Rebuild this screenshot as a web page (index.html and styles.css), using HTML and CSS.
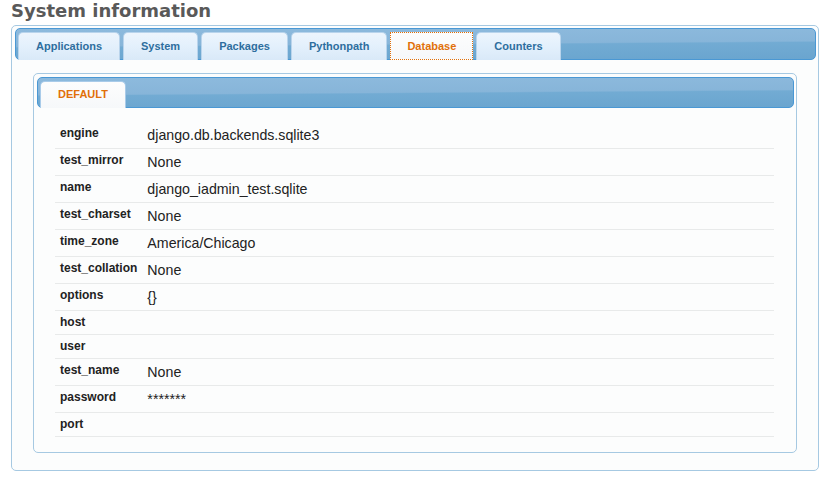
FILE: index.html
```html
<!DOCTYPE html>
<html>
<head>
<meta charset="utf-8">
<title>System information</title>
<link rel="stylesheet" href="styles.css">
</head>
<body>
<h1 class="title">System information</h1>
<div class="tabs outer">
  <ul class="nav outer-nav">
    <li class="tab">Applications</li>
    <li class="tab">System</li>
    <li class="tab">Packages</li>
    <li class="tab">Pythonpath</li>
    <li class="tab active focus">Database</li>
    <li class="tab">Counters</li>
  </ul>
  <div class="outer-panel">
    <div class="tabs inner">
      <ul class="nav inner-nav">
        <li class="tab active inner-tab">DEFAULT</li>
      </ul>
      <div class="inner-panel">
        <table class="info">
          <tr><th>engine</th><td>django.db.backends.sqlite3</td></tr>
          <tr><th>test_mirror</th><td>None</td></tr>
          <tr><th>name</th><td>django_iadmin_test.sqlite</td></tr>
          <tr><th>test_charset</th><td>None</td></tr>
          <tr><th>time_zone</th><td>America/Chicago</td></tr>
          <tr><th>test_collation</th><td>None</td></tr>
          <tr><th>options</th><td>{}</td></tr>
          <tr><th>host</th><td></td></tr>
          <tr><th>user</th><td></td></tr>
          <tr><th>test_name</th><td>None</td></tr>
          <tr><th>password</th><td>*******</td></tr>
          <tr><th>port</th><td></td></tr>
        </table>
      </div>
    </div>
  </div>
</div>
</body>
</html>
```
FILE: styles.css
```css
html, body {
  background: #ffffff;
}
body {
  margin: 0;
  padding: 0 14px 0 11px;
  font-family: "Liberation Sans", Arial, sans-serif;
}
.title {
  margin: 0 0 4px;
  font: bold 18px/21px "DejaVu Sans", sans-serif;
  color: #595959;
}
.tabs {
  border: 1px solid #a6c9e2;
  border-radius: 5px;
  background: #fcfdfd;
}
.outer {
  padding: 2px 2px 0 3px;
}
.inner {
  padding: 3px 2px 0 3px;
}
.nav {
  margin: 0;
  list-style: none;
  display: flex;
  align-items: flex-end;
  gap: 3px;
  border: 1px solid #4a98d4;
  border-radius: 5px;
  background: linear-gradient(179.6deg, #8dbadd 0%, #87b5d9 49%, #72abd3 53%, #6aa5cf 100%);
}
.outer-nav {
  padding: 3px 2px 0;
}
.inner-nav {
  padding: 3px 2px 0;
}
.tab {
  margin-bottom: -1px;
  border: 1px solid #b9d4ec;
  border-bottom: 0;
  border-radius: 5px 5px 0 0;
  background: linear-gradient(#edf5fd 0%, #e3f0fc 50%, #d9e9f8 100%);
  color: #2e6e9e;
  font: bold 11px/13px "Liberation Sans", Arial, sans-serif;
  padding: 7px 17px;
  white-space: nowrap;
}
.tab.active {
  background: linear-gradient(#fdfdfd, #f6f8fa);
  color: #e17009;
  border-color: #a9cbe9;
}
.tab.focus {
  border: 1px dotted #e17009;
  border-bottom: 1px dotted #e17009;
  border-radius: 0;
  padding: 7px 16px 6px;
}
.inner-tab {
  padding: 6px 17px 7px;
}
.outer-panel {
  padding: 13px 19px 17px 18px;
}
.inner-panel {
  padding: 14px 20px 15px 18px;
}
.info {
  width: 100%;
  border-collapse: collapse;
  color: #222;
}
.info tr {
  border-bottom: 1px solid #e8eaea;
}
.info th {
  width: 77px;
  text-align: left;
  vertical-align: top;
  padding: 4px 5px 5px;
  font: bold 12px/14px "Liberation Sans", Arial, sans-serif;
  white-space: nowrap;
}
.info td {
  vertical-align: top;
  padding: 5px 5px 4px;
  font: 14.2px/17px "Liberation Sans", Arial, sans-serif;
}
```
